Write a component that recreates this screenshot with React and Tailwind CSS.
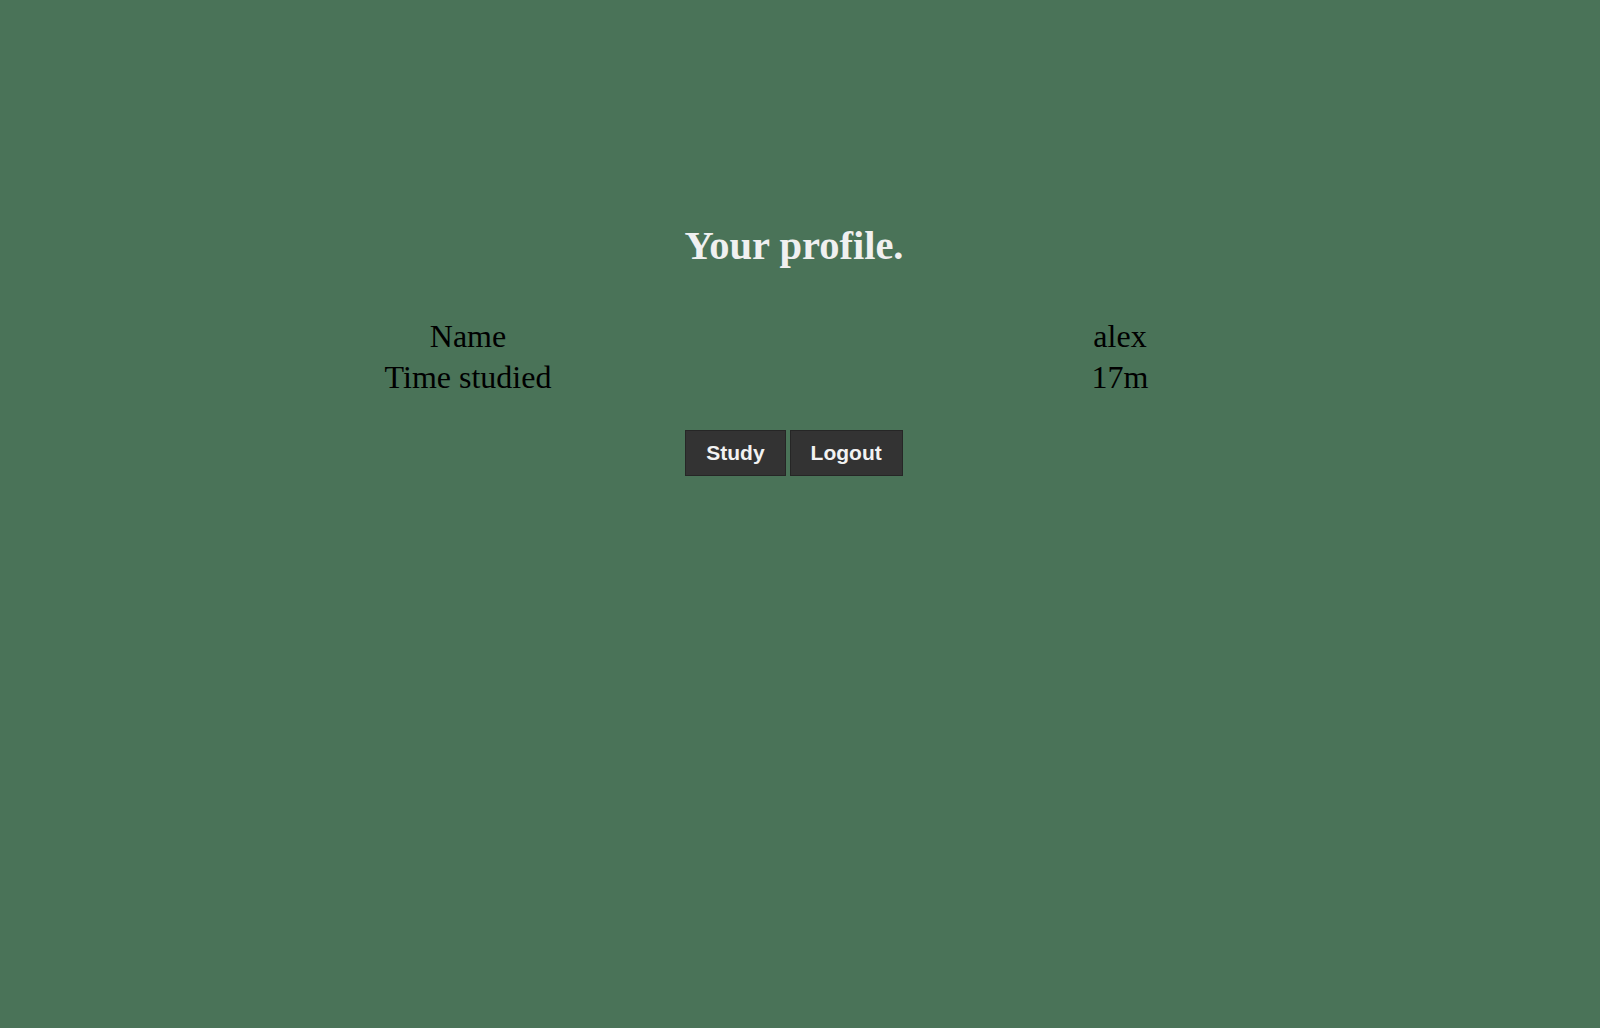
export default function App() {
  return (
    <div className="min-h-screen w-full bg-[#4a7358] flex flex-col items-center pt-[222px] pr-[12px]">
      <h1
        className="text-[40.5px] leading-[48px] font-bold text-[#f0f0f0]"
        style={{ fontFamily: '"Liberation Serif", "Times New Roman", serif' }}
      >
        Your profile.
      </h1>
      <div
        className="mt-[46px] grid grid-cols-[652px_652px] text-[32px] leading-[41px] text-black text-center"
        style={{ fontFamily: '"Liberation Serif", "Times New Roman", serif' }}
      >
        <div>Name</div>
        <div>alex</div>
        <div>Time studied</div>
        <div>17m</div>
      </div>
      <div
        className="mt-[32px] flex gap-[4px]"
        style={{ fontFamily: '"Liberation Sans", Arial, sans-serif' }}
      >
        <button className="bg-[#333333] border border-[#262626] text-[#f2f2f2] font-bold text-[21px] leading-[24px] px-[20px] py-[10px]">
          Study
        </button>
        <button className="bg-[#333333] border border-[#262626] text-[#f2f2f2] font-bold text-[21px] leading-[24px] px-[20px] py-[10px]">
          Logout
        </button>
      </div>
    </div>
  );
}
